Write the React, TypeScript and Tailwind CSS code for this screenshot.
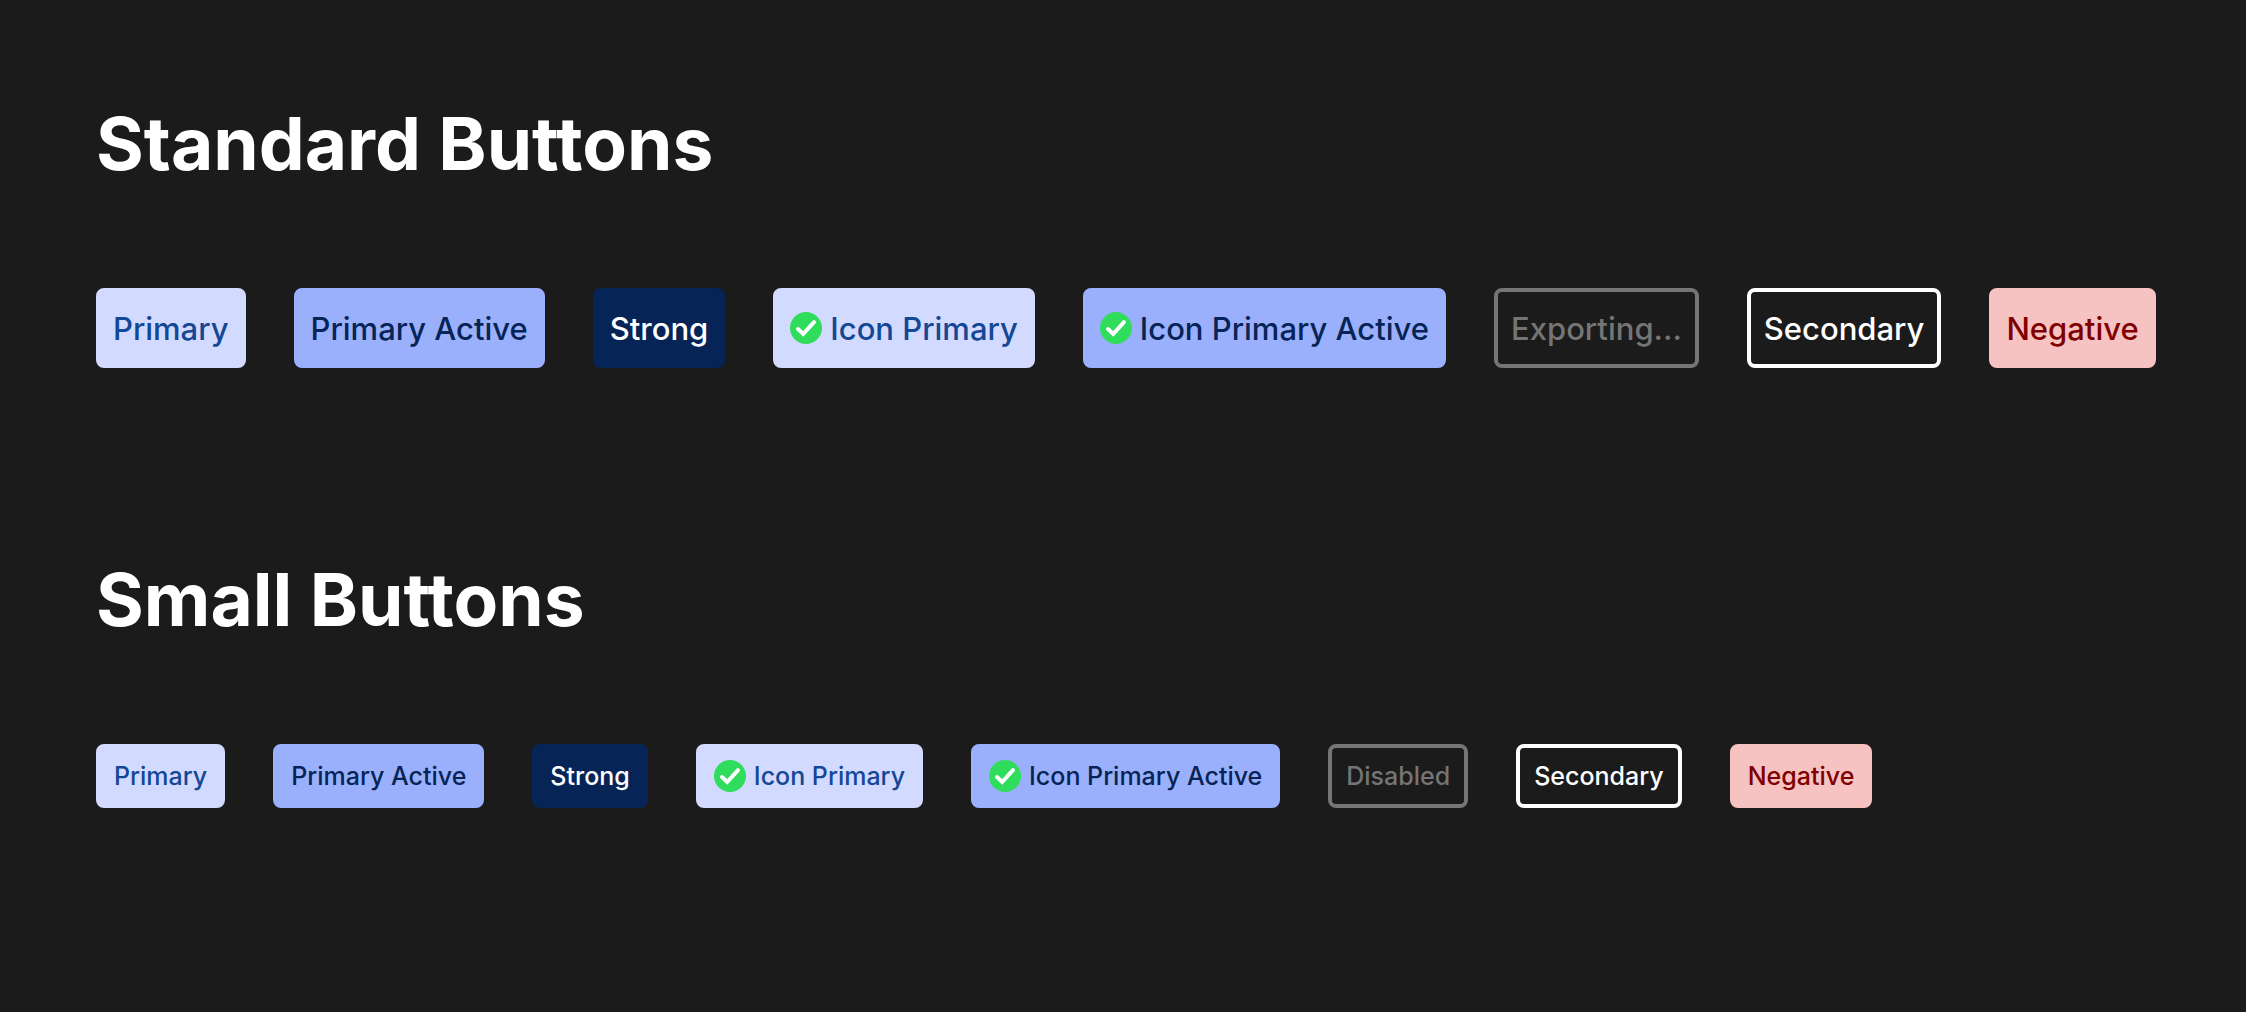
import type { ReactNode } from "react";

type Variant = "primary" | "active" | "strong" | "disabled" | "secondary" | "negative";
type Size = "standard" | "small";

const variants: Record<Variant, string> = {
  primary: "border-[#d3daff] bg-[#d3daff] text-[#144794]",
  active: "border-[#9bb0fc] bg-[#9bb0fc] text-[#062456]",
  strong: "border-[#062456] bg-[#062456] text-white",
  disabled: "border-[#757575] bg-transparent text-[#757575]",
  secondary: "border-white bg-transparent text-white",
  negative: "border-[#f7c2c2] bg-[#f7c2c2] text-[#7f0000]",
};

const sizes: Record<Size, string> = {
  standard: "h-20 px-[13px] text-[31px]",
  small: "h-16 px-[14px] text-[25px]",
};

function CheckIcon() {
  return (
    <svg viewBox="0 0 32 32" className="size-8 shrink-0" aria-hidden="true">
      <circle cx="16" cy="16" r="16" fill="#2fdc5c" />
      <path d="M8 17 13.2 22 24 10.2" fill="none" stroke="white" strokeWidth="4" strokeLinecap="round" />
    </svg>
  );
}

function Button({ variant, size, icon = false, children }: { variant: Variant; size: Size; icon?: boolean; children: ReactNode }) {
  return (
    <button
      type="button"
      disabled={variant === "disabled"}
      className={`flex shrink-0 items-center justify-center gap-2 rounded-lg border-4 font-medium whitespace-nowrap ${sizes[size]} ${variants[variant]}`}
    >
      {icon && <CheckIcon />}
      <span className="pt-0.5">{children}</span>
    </button>
  );
}

function ButtonSection({ title, size, disabledLabel }: { title: string; size: Size; disabledLabel: string }) {
  return (
    <section>
      <h2 className="text-[73px] leading-[96px] font-bold text-white">{title}</h2>
      <div className="mt-24 flex gap-12">
        <Button variant="primary" size={size}>Primary</Button>
        <Button variant="active" size={size}>Primary Active</Button>
        <Button variant="strong" size={size}>Strong</Button>
        <Button variant="primary" size={size} icon>Icon Primary</Button>
        <Button variant="active" size={size} icon>Icon Primary Active</Button>
        <Button variant="disabled" size={size}>{disabledLabel}</Button>
        <Button variant="secondary" size={size}>Secondary</Button>
        <Button variant="negative" size={size}>Negative</Button>
      </div>
    </section>
  );
}

export default function App() {
  return (
    <main className="flex min-h-screen flex-col gap-[184px] bg-[#1b1b1b] px-24 pt-24 font-['Inter',sans-serif]">
      <ButtonSection title="Standard Buttons" size="standard" disabledLabel="Exporting..." />
      <ButtonSection title="Small Buttons" size="small" disabledLabel="Disabled" />
    </main>
  );
}
